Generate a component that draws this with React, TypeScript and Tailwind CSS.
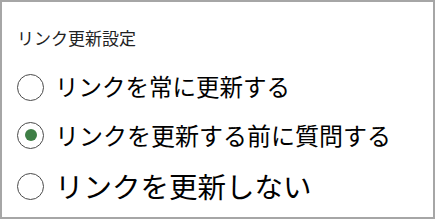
import React from "react";

type Opt = { label: string; checked?: boolean; size: string };

const options: Opt[] = [
  { label: "リンクを常に更新する", size: "text-[23.5px]" },
  { label: "リンクを更新する前に質問する", checked: true, size: "text-[24px]" },
  { label: "リンクを更新しない", size: "text-[28.5px]" },
];

const Radio: React.FC<{ checked?: boolean }> = ({ checked }) => (
  <span className="box-border flex h-[27px] w-[27px] min-w-[27px] shrink-0 items-center justify-center rounded-full border-[1.5px] border-[#4a4a4a] bg-white">
    {checked && <span className="h-[12px] w-[12px] rounded-full bg-[#3f7f46]" />}
  </span>
);

export default function App() {
  return (
    <div
      className="h-[219px] w-[435px] border-2 border-[#a6a6a6] bg-white pl-[15px] text-black"
      style={{ fontFamily: '"Noto Sans CJK JP", "Noto Sans", sans-serif' }}
    >
      <div className="mt-[24px] h-[24px] text-[17px] leading-[24px] text-[#222]">リンク更新設定</div>
      <div className="mt-[12px] flex flex-col">
        {options.map((o, i) => (
          <label
            key={o.label}
            className={`flex items-center gap-[11px] ${i === 0 ? "h-[50px]" : i === 1 ? "h-[46px]" : "h-[56px]"}`}
          >
            <Radio checked={o.checked} />
            <span className={`${o.size} leading-none whitespace-nowrap`}>{o.label}</span>
          </label>
        ))}
      </div>
    </div>
  );
}
